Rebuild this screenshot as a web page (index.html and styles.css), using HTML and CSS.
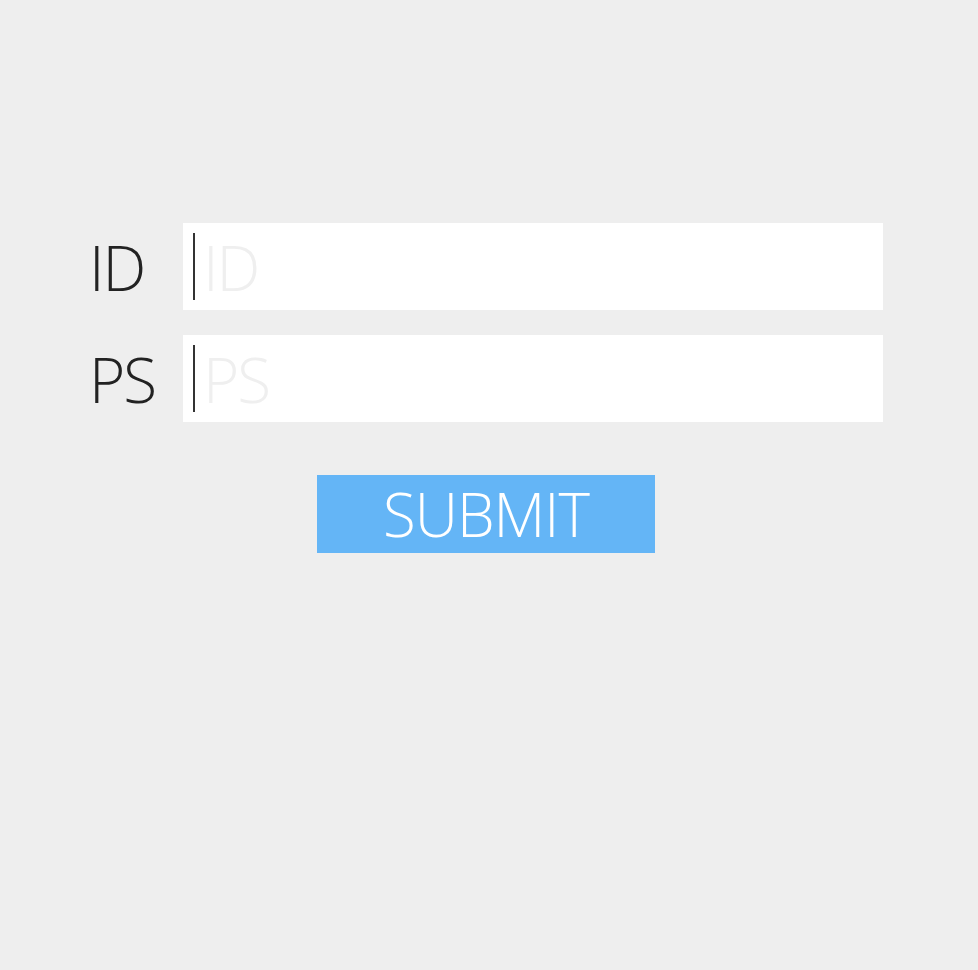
FILE: index.html
```html
<!DOCTYPE html>
<html lang="en">
<head>
  <meta charset="UTF-8" />
  <meta name="viewport" content="width=device-width, initial-scale=1.0" />
  <title>Login</title>
  <link rel="stylesheet" href="styles.css">
</head>
<body>

  <form class="login" onsubmit="return false">
    <div class="row">
      <label for="id">ID</label>
      <div class="field">
        <span class="caret"></span>
        <input type="text" id="id" placeholder="ID" />
      </div>
    </div>

    <div class="row">
      <label for="ps">PS</label>
      <div class="field">
        <span class="caret"></span>
        <input type="password" id="ps" placeholder="PS" />
      </div>
    </div>

    <button type="submit" class="submit">SUBMIT</button>
  </form>

</body>
</html>
```

FILE: styles.css
```css
* {
  box-sizing: border-box;
}

body {
  margin: 0;
  background: #eeeeee;
  font-family: "Open Sans", "Noto Sans", sans-serif;
  font-weight: 300;
  color: #222;
}

.login {
  width: 794px;
  margin-left: 89px;
  padding-top: 223px;
  display: flex;
  flex-direction: column;
  gap: 25px;
}

.row {
  display: grid;
  grid-template-columns: 94px 700px;
  height: 87px;
  align-items: center;
}

label {
  font-size: 62px;
  line-height: 1;
  letter-spacing: -2px;
}

.field {
  display: flex;
  align-items: center;
  height: 100%;
  background: #fff;
  padding-left: 10px;
}

.caret {
  width: 2px;
  height: 67px;
  background: #333;
  flex: none;
}

.field input {
  flex: 1;
  min-width: 0;
  height: 100%;
  border: none;
  outline: none;
  background: transparent;
  padding: 0 0 0 8px;
  font-family: inherit;
  font-weight: 300;
  font-size: 62px;
  letter-spacing: -2px;
  color: #222;
}

.field input::placeholder {
  color: #efefef;
}

.submit {
  align-self: center;
  width: 338px;
  height: 78px;
  margin-top: 28px;
  border: none;
  background: #64b5f6;
  color: #fff;
  font-family: inherit;
  font-weight: 300;
  font-size: 60px;
  letter-spacing: -1px;
  line-height: 1;
  padding: 0;
  cursor: pointer;
}
```
